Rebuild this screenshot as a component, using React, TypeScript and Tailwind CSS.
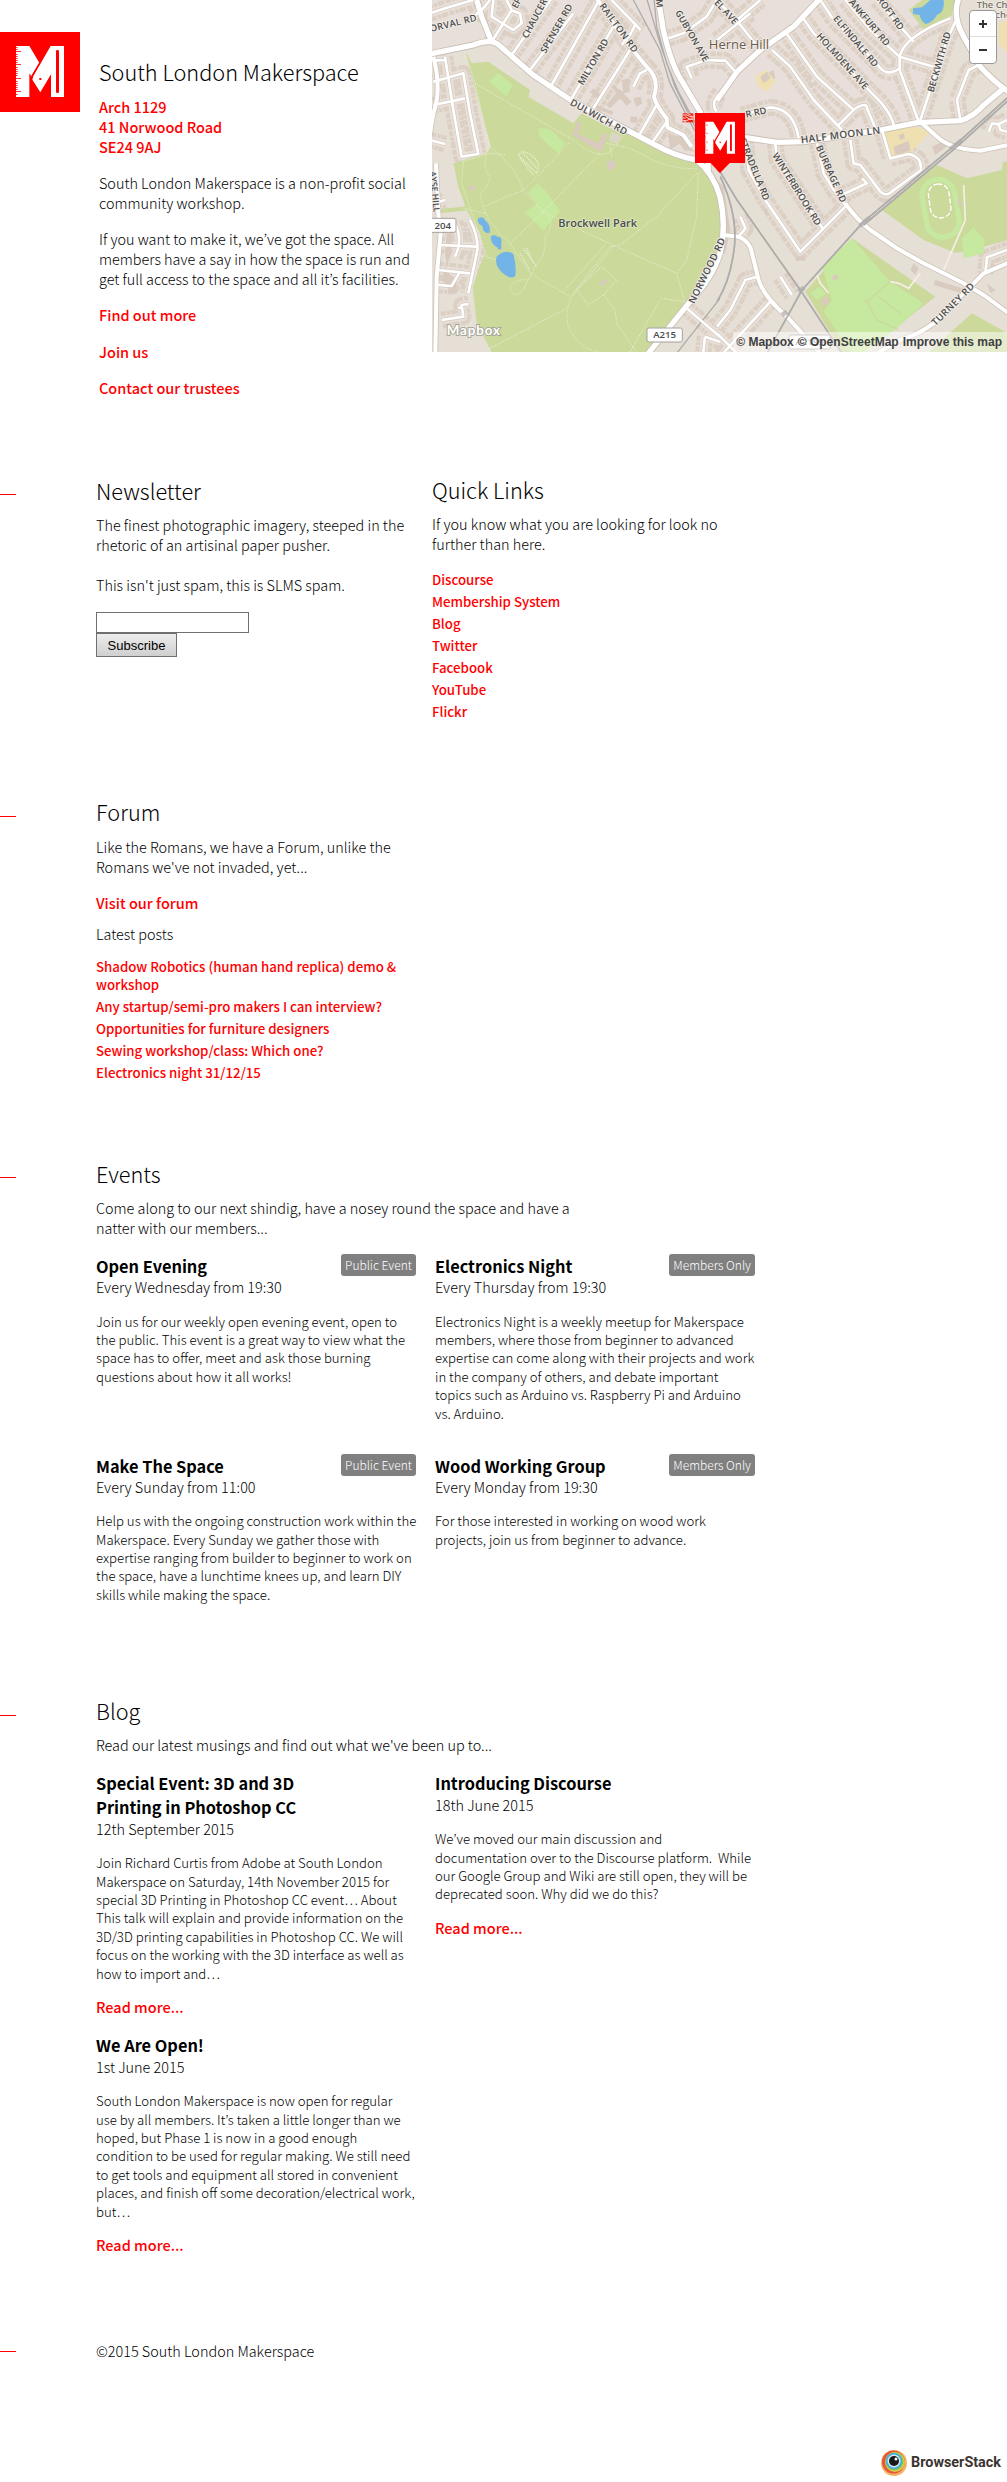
import type { ReactNode } from "react";

const body = "text-[14.42px] leading-5 whitespace-pre";
const small = "text-[13.2px] leading-[18.4px] whitespace-pre";
const link = "text-[#ff0000] font-medium text-[14.5px] leading-5 whitespace-pre";
const h2 = "text-[21.7px] leading-[30px] whitespace-pre";
const h3 = "text-[16.35px] font-bold leading-6 whitespace-pre";

function LogoMark() {
  return (
    <g>
      <rect width="240" height="240" fill="#ff0000" />
      <path fill="#fff" d="M48 42H88L118 92L93 134L91 127L88 125V195H48Z" />
      <path fill="#fff" d="M152 42H192V195H153V127L121 181L97 143L100 132Z" />
      <path stroke="#ff0000" strokeWidth="3.5" fill="none" d="M124 84L95 134" />
      <rect x="168" y="54" width="9" height="129" rx="4" fill="#ff0000" />
      <rect x="118" y="138" width="6" height="6" fill="#ff0000" />
      <path
        stroke="#ff0000"
        strokeWidth="2.4"
        d="M48 46.5h5M48 52.5h5M48 58.5h15M48 67.5h5M48 73.5h5M48 79.5h5M48 85.5h5M48 91.5h5M48 97.5h15M48 106.5h5M48 112.5h5M48 118.5h5M48 124.5h5M48 130.5h5M48 139.5h15M48 148.5h5M48 154.5h5M48 160.5h5M48 166.5h5M48 172.5h5M48 178.5h15M48 187.5h5"
      />
    </g>
  );
}

/* Streets, grouped by weight: [path, horizontal offset of its tile] */
const L = 0;
const R = 861;
type Road = [string, number];

const majorRoads: Road[] = [
  ["M0 162L130 135Q175 118 200 130L310 225L430 305L600 395L680 437Q740 470 800 480", L],
  ["M800 480Q850 520 870 590Q890 680 870 760Q850 830 780 905L655 1060", L],
  ["M140 0L155 50L185 125", L],
  ["M685 -5L700 90Q725 200 760 250L810 335L830 400L835 520", L],
  ["M310 -5L230 80L130 150L60 215L0 300", R],
  ["M80 412L180 427L260 425L490 390L600 368L730 362Q770 350 800 315L860 265", R],
  ["M725 -5Q705 50 740 110L790 200Q830 245 875 275", R],
];

const midRoads: Road[] = [
  ["M615 370L660 410Q700 448 790 452L875 435", R],
  ["M385 610Q420 660 460 690L540 745L620 790L740 850L800 885L875 940", R],
  ["M875 788L800 820L760 860L650 970Q600 1005 550 1020L480 1060", R],
  ["M20 705L65 710Q100 725 105 760L125 840Q140 890 210 950L310 1060", R],
  ["M500 -5L560 85L600 140L650 200Q690 235 672 290Q680 320 710 355L712 382L760 405L785 440", L],
  ["M10 170Q36 270 10 340Q3 380 -4 430", L],
  ["M18 490L25 640L32 700L20 830L16 1060", L],
];

const minorRoads: Road[] = [
  ["M365 -5L245 165M430 40L300 210M505 5L365 255M550 80L425 295M600 150L490 325M680 315L628 405M710 365L665 430M545 0L632 90M618 70L600 105L575 135", L],
  ["M185 125L245 30L230 0M190 0L185 50L250 90L275 70L270 40L240 30M130 50L160 25L180 0", L],
  ["M0 40L60 20L130 0M10 182L45 180M45 170L70 330L95 470L145 462L120 340L100 220L10 245M105 295L10 315M0 420L45 432M15 610L45 600", L],
  ["M120 660Q150 720 140 760L115 880M30 735L140 740M75 670Q100 720 75 770M25 810L120 820M25 855L65 858L90 815M35 960L100 950L95 915L115 912M95 920L85 925", L],
  ["M715 115L760 100L830 50L860 0M785 235L770 200L830 180L870 182M610 260L630 220L650 210", L],
  ["M770 925L870 1010M870 1025L825 1010M820 1056L825 1010M870 280Q840 310 860 335", L],
  ["M60 60L130 0M0 0L70 75L130 150M0 120L100 40M0 182L25 182L55 215", R],
  ["M255 50L290 100L380 190L460 275Q520 330 530 375M310 0L350 60L480 190Q505 235 548 205M385 0L460 90L548 170L650 200M480 0L590 125M700 55Q560 110 548 170L548 210L605 365M715 65L690 120L610 360", R],
  ["M205 95L300 230L410 330M165 150L220 200L290 300L375 390M360 380L415 325Q450 305 450 325L475 385M785 195L755 210L720 300L730 360", R],
  ["M300 430L320 520L350 570L385 615M175 430L180 480L320 690M85 420L95 510L145 600L250 755L385 620M380 582L450 550L435 535M400 420L410 490L430 495L490 575Q505 590 520 578L612 510Q615 470 575 462L520 475L495 390", R],
  ["M75 345L160 322Q230 325 245 415M120 830L85 840L40 930L0 980M160 905L0 1080M875 748L810 772L805 820M870 360L840 375M815 395L825 370L845 372L850 390L870 395M70 650L85 685L65 710M190 830L225 885M0 1000L60 1060", R],
];

const railways: Road[] = [
  ["M610 0L690 150L720 250L790 385L850 470L870 520M650 -5L690 130L735 260L800 390L865 515M672 -5L680 80L710 190L745 275L810 395M870 895L740 1060", L],
  ["M0 500L60 600L250 870L375 1060M10 530Q70 660 48 770Q35 850 0 905M875 290L720 430L440 665L255 870L150 1060M875 300L720 440L440 675", R],
];

const footpaths: Road[] = [
  ["M105 155L135 250L180 440Q250 490 280 570L340 635M135 250L430 420Q500 480 540 455L580 410M180 440Q150 500 180 530Q170 570 150 580Q160 660 240 730L300 820L420 890M160 620L280 570L340 510L420 425M240 730L340 635L510 460M530 430Q600 440 650 470Q720 510 800 505M805 520L800 650L770 780L740 820L765 910M800 520L680 650L570 735L540 740L440 865Q400 920 415 980Q450 1050 510 1056M340 635L440 685L570 745L740 820M340 635Q380 670 345 710Q350 770 315 800L280 870Q250 900 240 860Q260 835 300 840M400 875L525 735M430 885L550 740M440 870L475 915L520 885L560 840L515 800L440 870M520 885L555 930L560 970L620 1056M695 895L765 905M600 1056L690 900M100 485L95 550L170 770L200 780M100 485L180 460L225 465M540 430L545 470M170 1050L410 925M165 640L100 625", L],
  ["M125 990Q105 860 165 760", L],
];

function Streets({ roads, width, color, dash }: { roads: Road[]; width: number; color: string; dash?: string }) {
  return (
    <g fill="none" stroke={color} strokeWidth={width} strokeLinejoin="round" strokeDasharray={dash}>
      {roads.map(([d, dx]) => (
        <path key={d} d={d} transform={`translate(${dx} 0)`} />
      ))}
    </g>
  );
}

/* [text, centre x, centre y, angle, size, letter spacing] */
const streetNames: [string, number, number, number, number, number][] = [
  ["ORVAL RD", 70, 70, -14, 28, 1],
  ["CHAUCER", 314, 56, -62, 28, 0],
  ["EF", 260, 10, -62, 27, 0],
  ["SPENSER RD", 380, 86, -60, 28, 0],
  ["MILTON RD", 490, 186, -60, 28, 0],
  ["RAILTON RD", 566, 84, 54, 28, 1],
  ["DULWICH RD", 506, 352, 29, 29, 1],
  ["GUBYON AVE", 786, 108, 60, 27, 0],
  ["NORWOOD RD", 832, 812, -64, 29, 1],
  ["AYSE HILL", 14, 575, 84, 26, 0],
  ["M", 688, 10, 85, 27, 0],
  ["EL AVE", 888, 36, 48, 28, 0],
  ["ELFINDALE RD", 1277, 124, 50, 28, 0],
  ["ANKFURT RD", 1318, 68, 50, 28, 0],
  ["CROFT RD", 1376, 33, 54, 28, 0],
  ["HOLMDENE AVE", 1237, 184, 48, 28, 0],
  ["BECKWITH RD", 1528, 186, -74, 28, 0],
  ["R RD", 978, 338, -12, 28, 0],
  ["HALF MOON LN", 1232, 406, -7, 30, 1],
  ["BURBAGE RD", 1203, 522, 66, 28, 1],
  ["WINTERBROOK RD", 1100, 568, 58, 28, 0],
  ["STRADELLA RD", 973, 508, 68, 28, 0],
  ["TURNEY RD", 1570, 913, -45, 29, 1],
];

function AreaMap() {
  const built: Road[] = [...minorRoads, midRoads[4]];
  return (
    <svg className="block h-[352px] w-[575px]" viewBox="6 0 1725 1056" preserveAspectRatio="none">
      <rect width="1740" height="1056" fill="#e6dfd6" />
      <path fill="#e8dfda" d="M0 0H1500V360L1100 430L800 480L600 400L310 225L185 125L0 160Z" />
      <Streets roads={built} width={50} color="#dccfc3" dash="15 4 9 3 20 5" />
      <Streets roads={built} width={25} color="#e8dfd8" />
      <g fill="#d9cbc0">
        <path d="M545 255l35 20-5-35 20-5 5 40-20 5 25 25-15 12-20-22-30 30-12-10 30-35zM490 265l25 20-8 12-28-20zM500 315l50 20-4 10-50-20zM610 295l22-5 5 20-18 10zM600 350l22 0 0 18-20 0zM715 400l25 10 25-15 10 40 20 20-30-5-15-20-30 20z" />
        <path d="M50 700l15 0 0 60-20 50 35 30 0 40-25 0 0-20-20-20 15-50-5-30z" />
        <path transform="translate(861 0)" d="M150 220l20-10 5 25-25 15zM55 255l40 35M320 480l20 0 5 50-15 10zM215 500l100 170-10 10-95-170zM140 630l10-5 5 12-10 8zM0 540l20 20 20 130-15 70-10 0zM235 770l30 0 0 12-28 0zM590 790l15 15-10 20-15-15zM655 840l100 30-5 15-100-30zM810 850l25 20-15 10zM645 440l40-20 10 15-40 30z" />
      </g>
      <path fill="#cbd99b" d="M105 152L125 190L175 185L300 270L295 290L430 370L455 340L540 385L600 405L680 440L740 470L800 485L840 535L870 590L870 740L775 905L650 1056H185L140 970L128 860L165 760L150 700L110 630L85 560L70 490L170 460L182 440Z" />
      <path fill="#cbd99b" d="M30 628l85-10 5 12-90 10z" />
      <path fill="#c7e89f" d="M178 245L205 218L247 255L230 290ZM325 385L360 388L405 430L385 462L330 410ZM295 578L322 550L348 575L390 632L340 692L285 638L320 610Z" />
      <path fill="#d9c9bf" d="M443 362l10 5-10 35 62 28 15-30 12 5-20 50-85-50zM530 485l20-5 8 22-22 10zM508 850l20-15 6 8-20 16zM118 555l15 2 2 14-18 0z" />
      <path fill="#dbd7c7" d="M545 395l30 15-15 22-22-10z" />
      <path fill="#73b4e8" d="M145 655q15-8 20 5 18 15 14 38-20 5-22-20-18-10-12-23zM182 710q10-10 20 0 15 0 12 15 0 15 0 22-10 5-12-5-20-10-20-32zM200 770q25-25 50-8 10 35 6 65-12 12-30-2-35-25-26-55z" />
      <g transform="translate(861 0)">
        <path fill="#cbd99b" d="M575 30L615 0H715L705 45L625 95ZM495 630L660 495L750 535L855 510L858 485H872V720L745 755L715 758L620 720ZM265 875L405 715L655 890L500 1010L430 1056H375ZM635 1056L765 940L872 1000V1056Z" />
        <path fill="#c7e89f" d="M315 800L405 715L520 845L620 910L540 985L440 1056H400L320 935L345 900ZM280 880L305 860L328 880L300 900ZM735 715L770 682L803 720L800 760L740 775Z" />
        <path fill="none" stroke="#cbd99b" strokeWidth="4" d="M520 845L450 905L480 960L545 990M450 905L440 900M485 890L550 940" />
        <rect x="622" y="538" width="98" height="174" rx="48" fill="none" stroke="#c7e89f" strokeWidth="16" transform="rotate(-10 671 625)" />
        <rect x="637" y="552" width="62" height="102" rx="30" fill="none" stroke="#fff" strokeWidth="4" strokeDasharray="16 6" transform="rotate(-8 668 603)" />
        <path fill="#73b4e8" d="M588 25L615 22L640 0H680Q685 35 660 45Q645 70 625 72Q610 60 608 45L588 42Z" />
        <path fill="#eee0b0" d="M495 395L600 380L640 395L580 460L520 475ZM118 225L150 210L175 245L150 275L120 255ZM845 70L870 60V160L845 130Z" />
        <path fill="#d9c9bf" d="M530 440l45-18 5 30-45 12zM545 405l15-5 4 15-15 5zM130 230l20-15 10 20-20 15zM345 828l15-5 5 12-15 8zM318 895l10-5 8 15-10 14-10-8zM722 590l15 25-12 5z" />
        <path fill="none" stroke="#f5efe8" strokeWidth="5" d="M300 825L310 850L335 880M520 845L545 850L575 865L610 820M740 555L745 660L680 810" />
      </g>
      <Streets roads={footpaths} width={3} color="#eef3da" dash="3 4" />
      <path fill="none" stroke="#eef3da" strokeWidth="4" strokeDasharray="3 3" d="M265 465Q280 440 320 480Q330 500 320 520L265 465M275 455L320 505M270 475L310 525M280 745L320 800M270 760L300 810M290 745L310 790" />
      <Streets roads={minorRoads} width={12} color="#d3c9bf" />
      <Streets roads={midRoads} width={17} color="#cfc5bb" />
      <Streets roads={majorRoads} width={21} color="#c9bfb5" />
      <Streets roads={railways} width={4} color="#aeadab" />
      <Streets roads={minorRoads} width={8} color="#fff" />
      <Streets roads={midRoads} width={12} color="#fff" />
      <Streets roads={majorRoads} width={16} color="#fff" />
      <Streets roads={[railways[1]]} width={5} color="#aeadab" />
      <g transform="translate(861 0)" stroke="#aeadab" strokeWidth="14" strokeOpacity=".7">
        <path d="M700 448L735 420M428 678L460 652M195 945L210 935M245 875L262 862" />
      </g>
      <g fontFamily="'Open Sans', 'Noto Sans', sans-serif" fill="#4c4c4c" stroke="#f3eee9" strokeWidth="5" strokeLinejoin="round" paintOrder="stroke" textAnchor="middle" fontWeight="600">
        {streetNames.map(([name, x, y, angle, size, spacing]) => (
          <text key={name} transform={`translate(${x} ${y}) rotate(${angle})`} dy="9" fontSize={size} letterSpacing={spacing}>
            {name}
          </text>
        ))}
        <text x="503" y="680" fontSize="33" stroke="#dfe8c4">Brockwell Park</text>
        <text x="927" y="147" fontSize="39" fontWeight="400" fill="#6b5c4c">Herne Hill</text>
        <text x="1640" y="25" fontSize="28" textAnchor="start" fill="#77716b">The Ch</text>
        <text x="1696" y="53" fontSize="28" textAnchor="start" fill="#77716b">cho</text>
      </g>
      <g fontFamily="'Open Sans', sans-serif" fontSize="29" fontWeight="600" fill="#4c4c4c" textAnchor="middle">
        <rect x="-20" y="655" width="98" height="42" rx="6" fill="#fff" stroke="#a5a09b" strokeWidth="3" />
        <text x="38" y="686">204</text>
        <rect x="651" y="984" width="106" height="42" rx="6" fill="#fff" stroke="#a5a09b" strokeWidth="3" />
        <text x="704" y="1015">A215</text>
        <rect x="1077" y="1005" width="124" height="42" rx="6" fill="#fff" stroke="#a5a09b" strokeWidth="3" />
        <text x="1139" y="1036" fill="#8a8a8a">A2199</text>
      </g>
      <text x="50" y="1006" fontFamily="Lato, sans-serif" fontSize="40" fontWeight="700" fill="#fff" stroke="#a9a89a" strokeWidth="6" paintOrder="stroke" textLength="160">Mapbox</text>
      <g transform="translate(758 340)">
        <rect width="32" height="27" fill="#ee2211" />
        <path stroke="#fff" strokeWidth="2.5" fill="none" d="M0 5H13L21 9H32M0 14H8M24 14H32M0 22H12L20 18H32M14 0L24 5M10 27L4 23M8 10L22 18" />
      </g>
      <path fill="#ff0000" d="M838 485H903L870 519Z" />
      <g transform="translate(795 339) scale(.625)">
        <LogoMark />
      </g>
    </svg>
  );
}

function MapPanel() {
  return (
    <div className="relative h-[352px] w-[575px] overflow-hidden">
      <AreaMap />
      <div className="absolute right-[10px] top-[10px] flex h-[54px] w-[28px] flex-col rounded-[4px] border border-[#999] bg-white">
        <span className="flex h-[26px] items-center justify-center border-b border-[#ddd]">
          <svg width="8" height="8" viewBox="0 0 8 8"><path d="M4 0V8M0 4H8" stroke="#333" strokeWidth="2" /></svg>
        </span>
        <span className="flex h-[26px] items-center justify-center">
          <svg width="8" height="8" viewBox="0 0 8 8"><path d="M0 4H8" stroke="#333" strokeWidth="2" /></svg>
        </span>
      </div>
      <div className="absolute bottom-0 right-0 flex h-[20px] w-[274px] items-center justify-end gap-[4px] whitespace-pre bg-white/50 pr-[5px] font-['Liberation_Sans',sans-serif] text-[12px] font-bold text-[#404040]">
        <span>© Mapbox</span>
        <span>© OpenStreetMap</span>
        <span>Improve this map</span>
      </div>
    </div>
  );
}

function Dash({ top }: { top: string }) {
  return <span className={"absolute left-0 h-px w-4 bg-[#ff0000] " + top} />;
}

function Event({ title, when, tag, text }: { title: string; when: string; tag: string; text: string }) {
  return (
    <article className="h-[199.5px]">
      <div className="flex h-[23px] items-start justify-between">
        <h3 className={h3}>{title}</h3>
        <span className="flex h-[22px] items-center rounded-[3px] bg-[#808080] px-1 text-[12px] leading-none text-white">{tag}</span>
      </div>
      <p className={body}>{when}</p>
      <p className={"mt-[15.6px] " + small}>{text}</p>
    </article>
  );
}

function Post({ title, date, text, className = "" }: { title: string; date: string; text: string; className?: string }) {
  return (
    <article className={className}>
      <h3 className={h3}>{title}</h3>
      <p className={body}>{date}</p>
      <p className={"mt-[15.2px] " + small}>{text}</p>
      <a className={"mt-[14px] block " + link}>Read more...</a>
    </article>
  );
}

function LinkList({ items }: { items: string[] }) {
  return (
    <ul className="flex flex-col gap-1">
      {items.map((item) => (
        <li key={item} className="whitespace-pre text-[13.25px] font-medium leading-[18px] text-[#ff0000]">{item}</li>
      ))}
    </ul>
  );
}

function Section({ children, className }: { children: ReactNode; className: string }) {
  return <section className={"relative pl-[96px] " + className}>{children}</section>;
}

export default function App() {
  return (
    <div className="relative h-[2482px] w-[1007px] overflow-hidden bg-white font-['Noto_Sans_CJK_KR','Noto_Sans_CJK_SC',sans-serif] font-light text-black">
      <header className="flex h-[476px] items-start">
        <svg className="mt-8 h-20 w-20 shrink-0" viewBox="0 0 240 240"><LogoMark /></svg>
        <div className="ml-[19px] w-[333px] shrink-0 pt-[57px]">
          <h1 className={h2}>South London Makerspace</h1>
          <p className={"mt-[10px] " + link}>{"Arch 1129\n41 Norwood Road\nSE24 9AJ"}</p>
          <p className={"mt-4 " + body}>{"South London Makerspace is a non-profit social\ncommunity workshop."}</p>
          <p className={"mt-4 " + body}>{"If you want to make it, we’ve got the space. All\nmembers have a say in how the space is run and\nget full access to the space and all it’s facilities."}</p>
          <a className={"mt-4 block " + link}>Find out more</a>
          <a className={"mt-[17px] block " + link}>Join us</a>
          <a className={"mt-4 block " + link}>Contact our trustees</a>
        </div>
        <MapPanel />
      </header>

      <Section className="flex h-[321px] items-start">
        <Dash top="top-[18px]" />
        <div className="w-[336px]">
          <h2 className={h2}>Newsletter</h2>
          <p className={"mt-[9px] " + body}>{"The finest photographic imagery, steeped in the\nrhetoric of an artisinal paper pusher."}</p>
          <p className={"mt-5 " + body}>This isn't just spam, this is SLMS spam.</p>
          <input className="mt-[17px] block h-[21px] w-[153px] border border-[#707070] bg-white" />
          <button className="block h-[24px] w-[81px] border border-[#707070] bg-gradient-to-b from-[#ededed] to-[#cfcfcf] font-['Liberation_Sans',sans-serif] text-[13px] font-normal leading-none">Subscribe</button>
        </div>
        <div className="-mt-px">
          <h2 className={h2}>Quick Links</h2>
          <p className={"mb-[17px] mt-[9px] " + body}>{"If you know what you are looking for look no\nfurther than here."}</p>
          <LinkList items={["Discourse", "Membership System", "Blog", "Twitter", "Facebook", "YouTube", "Flickr"]} />
        </div>
      </Section>

      <Section className="h-[362px]">
        <Dash top="top-[19px]" />
        <h2 className={h2}>Forum</h2>
        <p className={"mt-[10px] " + body}>{"Like the Romans, we have a Forum, unlike the\nRomans we've not invaded, yet..."}</p>
        <a className={"mt-4 block " + link}>Visit our forum</a>
        <p className={"mb-[14px] mt-[11px] " + body}>Latest posts</p>
        <LinkList
          items={[
            "Shadow Robotics (human hand replica) demo &\nworkshop",
            "Any startup/semi-pro makers I can interview?",
            "Opportunities for furniture designers",
            "Sewing workshop/class: Which one?",
            "Electronics night 31/12/15",
          ]}
        />
      </Section>

      <Section className="h-[537px]">
        <Dash top="top-[18px]" />
        <h2 className={h2}>Events</h2>
        <p className={"mt-[9px] " + body}>{"Come along to our next shindig, have a nosey round the space and have a\nnatter with our members..."}</p>
        <div className="mt-4 grid w-[659px] grid-cols-2 gap-x-[19px]">
          <Event title="Open Evening" when="Every Wednesday from 19:30" tag="Public Event" text={"Join us for our weekly open evening event, open to\nthe public. This event is a great way to view what the\nspace has to offer, meet and ask those burning\nquestions about how it all works!"} />
          <Event title="Electronics Night" when="Every Thursday from 19:30" tag="Members Only" text={"Electronics Night is a weekly meetup for Makerspace\nmembers, where those from beginner to advanced\nexpertise can come along with their projects and work\nin the company of others, and debate important\ntopics such as Arduino vs. Raspberry Pi and Arduino\nvs. Arduino."} />
          <Event title="Make The Space" when="Every Sunday from 11:00" tag="Public Event" text={"Help us with the ongoing construction work within the\nMakerspace. Every Sunday we gather those with\nexpertise ranging from builder to beginner to work on\nthe space, have a lunchtime knees up, and learn DIY\nskills while making the space."} />
          <Event title="Wood Working Group" when="Every Monday from 19:30" tag="Members Only" text={"For those interested in working on wood work\nprojects, join us from beginner to advance."} />
        </div>
      </Section>

      <Section className="h-[645px]">
        <Dash top="top-[19px]" />
        <h2 className={h2}>Blog</h2>
        <p className={"mt-[9px] " + body}>Read our latest musings and find out what we've been up to...</p>
        <div className="mt-4 grid w-[659px] grid-cols-2 gap-x-[19px]">
          <div>
            <Post title={"Special Event: 3D and 3D\nPrinting in Photoshop CC"} date="12th September 2015" text={"Join Richard Curtis from Adobe at South London\nMakerspace on Saturday, 14th November 2015 for\nspecial 3D Printing in Photoshop CC event… About\nThis talk will explain and provide information on the\n3D/3D printing capabilities in Photoshop CC. We will\nfocus on the working with the 3D interface as well as\nhow to import and…"} />
            <Post className="mt-4" title="We Are Open!" date="1st June 2015" text={"South London Makerspace is now open for regular\nuse by all members. It’s taken a little longer than we\nhoped, but Phase 1 is now in a good enough\ncondition to be used for regular making. We still need\nto get tools and equipment all stored in convenient\nplaces, and finish off some decoration/electrical work,\nbut…"} />
          </div>
          <Post title="Introducing Discourse" date="18th June 2015" text={"We’ve moved our main discussion and\ndocumentation over to the Discourse platform.  While\nour Google Group and Wiki are still open, they will be\ndeprecated soon. Why did we do this?"} />
        </div>
      </Section>

      <footer className="relative h-[109px] pl-[96px]">
        <Dash top="top-[10px]" />
        <p className={body}>©2015 South London Makerspace</p>
      </footer>

      <div className="absolute right-[6px] top-[2450px] flex h-[26px] items-center gap-[4px]">
        <svg width="26" height="26" viewBox="0 0 26 26">
          <circle cx="13" cy="13" r="13" fill="#f4b560" />
          <circle cx="12.5" cy="12" r="11.5" fill="#e9563f" />
          <circle cx="14" cy="12" r="10" fill="#d8cf4c" />
          <circle cx="13.5" cy="11.5" r="9" fill="#8fc14f" />
          <circle cx="13" cy="11" r="8" fill="#3bb0e0" />
          <circle cx="13" cy="11" r="6.5" fill="#d5e8f0" />
          <circle cx="13" cy="11" r="5" fill="#1a1a1a" />
          <circle cx="15" cy="9" r="1.5" fill="#fff" />
        </svg>
        <span className="font-['Roboto',sans-serif] text-[14.4px] font-bold text-[#3b3430]">BrowserStack</span>
      </div>
    </div>
  );
}
